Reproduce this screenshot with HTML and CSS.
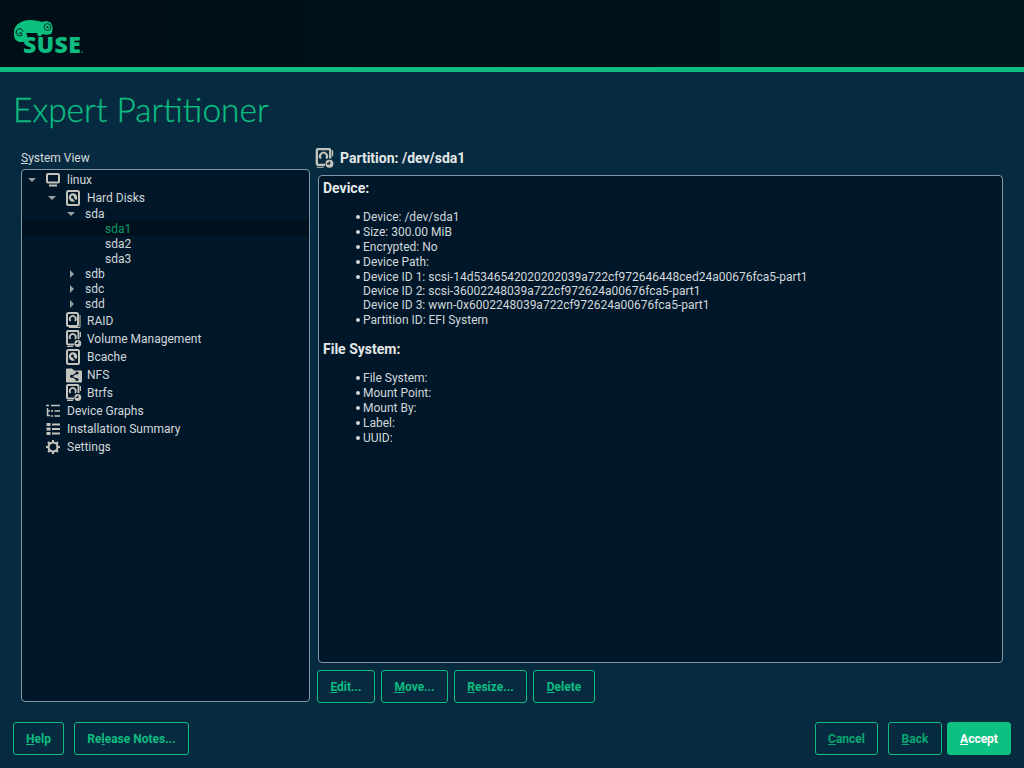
FILE: index.html
```html
<!doctype html>
<html>
  <head>
    <meta charset="utf-8">
    <title>Expert Partitioner</title>
    <link rel="stylesheet" href="styles.css">
  </head>
  <body>
    <svg class="defs" width="0" height="0">
      <symbol id="disk" viewBox="0 0 14 16">
        <rect x="1" y="1" width="12" height="14" rx="1.5" fill="none" stroke="#c4c4bc" stroke-width="2"/>
        <circle cx="7" cy="7.500" r="4.200" fill="#c4c4bc"/>
        <circle cx="6.500" cy="7" r="1.500" fill="#00172a"/>
        <path d="M7 8l3.500 4" stroke="#00172a" stroke-width="1.300"/>
      </symbol>
      <symbol id="raid" viewBox="0 0 15 18">
        <rect x="1" y="1" width="11" height="13" rx="1.5" fill="none" stroke="#c4c4bc" stroke-width="2"/>
        <path d="M14 3v12.500h-11" fill="none" stroke="#c4c4bc" stroke-width="1"/>
        <path d="M9 9a3 3 0 1 0-4.500 0" fill="none" stroke="#c4c4bc" stroke-width="1.800"/>
      </symbol>
      <symbol id="disk-clock" viewBox="0 0 16 18">
        <path d="M8 14.500h-6a1 1 0 0 1-1-1v-11.500a1 1 0 0 1 1-1h9.500a1 1 0 0 1 1 1v7" fill="none" stroke="#c4c4bc" stroke-width="2"/>
        <path d="M9 9a3 3 0 1 0-4.500 0" fill="none" stroke="#c4c4bc" stroke-width="1.800"/>
        <path d="M14.500 2v5M1 16.500h6" stroke="#c4c4bc" stroke-width="1"/>
        <circle cx="11.800" cy="13.500" r="3.400" fill="#c4c4bc"/>
        <path d="M11.800 11.500v2h-2" fill="none" stroke="#00172a" stroke-width="1.200"/>
      </symbol>
      <symbol id="share" viewBox="0 0 16 15">
        <path d="M0 1.500a1 1 0 0 1 1-1h5l2 2h7a1 1 0 0 1 1 1v10a1 1 0 0 1-1 1h-14a1 1 0 0 1-1-1z" fill="#c4c4bc"/>
        <path d="M11 5l-5.500 3.200 5.500 3.200" fill="none" stroke="#00172a" stroke-width="1.100"/>
        <circle cx="11" cy="5" r="1.500" fill="#00172a"/>
        <circle cx="5.500" cy="8.200" r="1.500" fill="#00172a"/>
        <circle cx="11" cy="11.400" r="1.500" fill="#00172a"/>
      </symbol>
    </svg>

    <header class="topbar">
      <div class="logo">
        <svg class="chameleon" viewBox="0 0 40 22" width="40" height="22">
          <path d="M0 11C1 4 8 0 16 0c5 0 9 1 12 2 3-1 7-1 9 1 2 3 2 8 0 11-3 1-6 1-9 0l-1 2h-3l-1-3c-3 0-8 0-11 0 2 3 2 6-1 8-3 2-8 1-10-2-1-2-1-4-1-6z" fill="#0bc07f"/>
          <path d="M5 14a1.500 1.500 0 1 1 2 1.500a3.500 3.500 0 1 1 2-4" fill="none" stroke="#00101a" stroke-width="1"/>
          <circle cx="33.500" cy="7" r="3.400" fill="none" stroke="#00101a" stroke-width="0.800"/>
          <circle cx="33.500" cy="7" r="1" fill="#00101a"/>
        </svg>
        <span class="wordmark">SUSE<i>.</i></span>
      </div>
    </header>

    <h1 class="page-title">Expert Partitioner</h1>

    <main class="content">
      <section class="left">
        <label class="tree-label"><u>S</u>ystem View</label>
        <div class="tree">
          <div class="row r18 lv0"><b class="arrow open"></b><svg class="mon" viewBox="0 0 14 14" width="14" height="14"><rect x="1" y="1" width="12" height="8.500" rx="1" fill="none" stroke="#c4c4bc" stroke-width="2"/><path d="M3 12.500h8" stroke="#c4c4bc" stroke-width="2"/></svg><span>linux</span></div>
          <div class="row r18 lv1"><b class="arrow open"></b><svg class="ic" width="14" height="16"><use href="#disk"/></svg><span>Hard Disks</span></div>
          <div class="row r15 lv2 first"><b class="arrow open"></b><span>sda</span></div>
          <div class="row r15 lv3 selected"><span>sda1</span></div>
          <div class="row r15 lv3"><span>sda2</span></div>
          <div class="row r15 lv3"><span>sda3</span></div>
          <div class="row r15 lv2"><b class="arrow closed"></b><span>sdb</span></div>
          <div class="row r15 lv2"><b class="arrow closed"></b><span>sdc</span></div>
          <div class="row r15 lv2"><b class="arrow closed"></b><span>sdd</span></div>
          <div class="row r18 lv1 after"><svg class="ic w15" width="15" height="18"><use href="#raid"/></svg><span>RAID</span></div>
          <div class="row r18 lv1"><svg class="ic w16" width="16" height="18"><use href="#disk-clock"/></svg><span>Volume Management</span></div>
          <div class="row r18 lv1"><svg class="ic" width="14" height="16"><use href="#disk"/></svg><span>Bcache</span></div>
          <div class="row r18 lv1"><svg class="ic w16" width="16" height="15"><use href="#share"/></svg><span>NFS</span></div>
          <div class="row r18 lv1"><svg class="ic w16" width="16" height="18"><use href="#disk-clock"/></svg><span>Btrfs</span></div>
          <div class="row r18 lv0"><svg class="ic" viewBox="0 0 14 14" width="14" height="14"><path d="M0 1.500h3M5 1.500h9M1.500 4v7.500h2.500M5 7h2M8.500 7h5.500M5 12h2M8.500 12h5.500M1.500 7h2.500" stroke="#c4c4bc" stroke-width="1.500" fill="none"/></svg><span>Device Graphs</span></div>
          <div class="row r18 lv0"><svg class="ic" viewBox="0 0 14 14" width="14" height="14"><path d="M0.500 1h4v3h-4zM0.500 5.500h4v3h-4zM0.500 10h4v3h-4z" fill="#c4c4bc"/><path d="M6 2.500h8M6 7h8M6 11.500h8" stroke="#c4c4bc" stroke-width="1.800"/></svg><span>Installation Summary</span></div>
          <div class="row r18 lv0"><svg class="ic" viewBox="0 0 14 14" width="14" height="14"><circle cx="7" cy="7" r="4.500" fill="none" stroke="#c4c4bc" stroke-width="2.200"/><path d="M7 0v2.500M7 11.500v2.500M0 7h2.500M11.500 7h2.500M2 2l1.800 1.800M10.200 10.200l1.800 1.800M2 12l1.800-1.800M10.200 3.800l1.800-1.800" stroke="#c4c4bc" stroke-width="2"/></svg><span>Settings</span></div>
        </div>
      </section>

      <section class="right">
        <div class="part-title">
          <svg width="20" height="21" viewBox="0 0 16 17"><use href="#disk-clock"/></svg>
          <strong>Partition: /dev/sda1</strong>
        </div>
        <div class="details">
          <h3>Device:</h3>
          <ul>
            <li>Device: /dev/sda1</li>
            <li>Size: 300.00 MiB</li>
            <li>Encrypted: No</li>
            <li>Device Path:</li>
            <li class="multi">Device ID 1: scsi-14d5346542020202039a722cf972646448ced24a00676fca5-part1<br>Device ID 2: scsi-36002248039a722cf972624a00676fca5-part1<br>Device ID 3: wwn-0x6002248039a722cf972624a00676fca5-part1</li>
            <li>Partition ID: EFI System</li>
          </ul>
          <h3>File System:</h3>
          <ul>
            <li>File System:</li>
            <li>Mount Point:</li>
            <li>Mount By:</li>
            <li>Label:</li>
            <li>UUID:</li>
          </ul>
        </div>
        <div class="actions">
          <button class="btn edit"><u>E</u>dit...</button>
          <button class="btn move"><u>M</u>ove...</button>
          <button class="btn resize"><u>R</u>esize...</button>
          <button class="btn delete"><u>D</u>elete</button>
        </div>
      </section>
    </main>

    <footer class="bottom">
      <button class="btn help"><u>H</u>elp</button>
      <button class="btn notes">Re<u>l</u>ease Notes...</button>
      <div class="spacer"></div>
      <button class="btn cancel"><u>C</u>ancel</button>
      <button class="btn back"><u>B</u>ack</button>
      <button class="btn accept"><u>A</u>ccept</button>
    </footer>
  </body>
</html>
```

FILE: styles.css
```css
* { box-sizing: border-box; }
html, body { height: 100%; }
body {
  margin: 0;
  width: 1024px;
  height: 768px;
  overflow: hidden;
  display: flex;
  flex-direction: column;
  background: #062b40;
  color: #dfe3e5;
  font-family: Roboto, "Liberation Sans", sans-serif;
  font-size: 12px;
}
.defs { position: absolute; }

.topbar {
  height: 72px;
  flex: none;
  padding: 20px 0 0 14px;
  background: linear-gradient(90deg, #000e17, #00161f);
  border-bottom: 5px solid #0cbc80;
}
.logo { position: relative; width: 72px; height: 36px; }
.chameleon { display: block; }
.wordmark {
  position: absolute;
  left: 9px;
  top: 11px;
  font-family: "Open Sans", sans-serif;
  font-weight: 800;
  font-size: 23px;
  line-height: 26px;
  letter-spacing: 0.4px;
  color: #0cbc80;
}
.wordmark i { font-size: 6px; font-style: normal; letter-spacing: 0; }

.page-title {
  margin: 0;
  height: 70px;
  padding: 17px 0 0 13px;
  flex: none;
  font-family: Lato, sans-serif;
  font-weight: 300;
  font-size: 33.5px;
  line-height: 40px;
  color: #0cbc80;
  -webkit-text-stroke: 0.3px #0cbc80;
}

.content {
  flex: none;
  height: 562px;
  display: flex;
  padding: 8px 21px 0 21px;
  gap: 8px;
}
.left { width: 289px; display: flex; flex-direction: column; }
.tree-label { height: 19px; padding-top: 1px; line-height: 15px; color: #d6dadc; }
.tree {
  height: 533px;
  padding-top: 1px;
  background: #00172a;
  border: 1px solid #8197a3;
  border-radius: 4px;
}

.row { display: flex; align-items: center; color: #d3d8da; }
.r18 { height: 18px; }
.r15 { height: 15px; }
.lv0 { padding-left: 24px; }
.lv1 { padding-left: 44px; }
.lv2 { padding-left: 63px; }
.lv3 { padding-left: 83px; }
.first { margin-top: -1px; }
.after { margin-top: 1px; }
.arrow { width: 0; height: 0; flex: none; display: block; }
.arrow.open { border: 4px solid transparent; border-top: 4px solid #9ba0a0; border-bottom: 0; margin-right: 10px; margin-left: -18px; }
.arrow.closed { border: 4px solid transparent; border-left: 4px solid #9ba0a0; border-right: 0; margin-right: 11px; margin-left: -15px; }
.row .ic, .row .mon { flex: none; margin-right: 7px; }
.row .w15 { margin-right: 6px; }
.row .w16 { margin-right: 5px; }
.selected { background: #00101c; color: #049a67; }

.right { width: 685px; display: flex; flex-direction: column; }
.part-title { height: 25px; padding-bottom: 9px; display: flex; align-items: center; gap: 5px; margin-left: -3px; }
.part-title svg { flex: none; }
.part-title strong { font-size: 14px; font-weight: 700; color: #e4e7e8; }
.details {
  height: 488px;
  padding: 4px 4px;
  background: #00172a;
  border: 1px solid #8197a3;
  border-radius: 4px;
  line-height: 15px;
  color: #d3d8da;
}
.details h3 { margin: 0 0 14px; font-size: 14px; line-height: 16px; font-weight: 700; color: #e4e7e8; }
.details ul { margin: 0 0 13px; padding-left: 40px; list-style: none; }
.details li { position: relative; }
.details li.multi { line-height: 14px; margin-bottom: 1px; }
.details li::before {
  content: "";
  position: absolute;
  left: -7px;
  top: 5px;
  width: 4px;
  height: 4px;
  border-radius: 50%;
  background: #d3d8da;
}

.btn {
  height: 33px;
  padding: 0;
  background: transparent;
  border: 1px solid #0cbc80;
  border-radius: 3px;
  color: #0cbc80;
  font-family: Roboto, sans-serif;
  font-size: 12px;
  font-weight: 700;
}
.actions { display: flex; gap: 6px; margin: 7px 0 0 -1px; }
.edit { width: 58px; }
.move { width: 67px; }
.resize { width: 73px; }
.delete { width: 62px; }

.bottom { display: flex; padding: 18px 13px 0; flex: none; }
.help { width: 51px; margin-right: 10px; }
.notes { width: 115px; }
.spacer { flex: 1; }
.cancel { width: 63px; margin-right: 10px; color: #07a870; }
.back { width: 54px; margin-right: 5px; color: #07a870; }
.accept { width: 64px; background: #0cc082; border-color: #0cc082; color: #fff; }
```
